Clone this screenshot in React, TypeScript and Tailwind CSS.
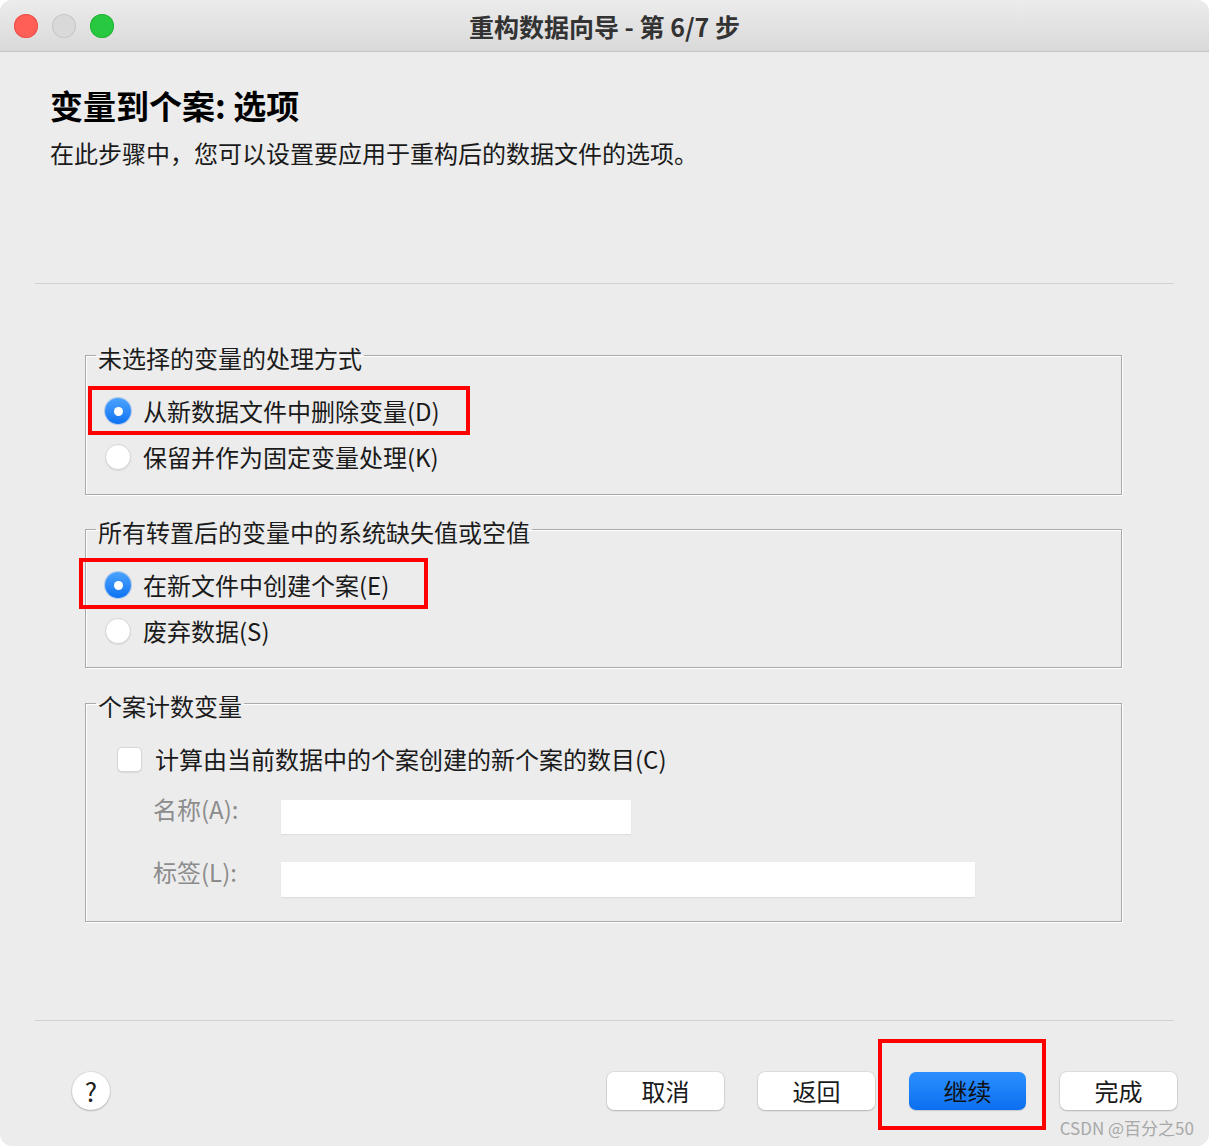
import React from 'react';

const FONT = { fontFamily: '"Noto Sans CJK SC", "Noto Sans", sans-serif' };

function Radio({ checked }: { checked?: boolean }) {
  if (checked) {
    return (
      <span className="flex h-[26px] w-[26px] shrink-0 items-center justify-center rounded-full bg-gradient-to-b from-[#4aa3ff] to-[#0a72f2] shadow-[0_0_0_1px_rgba(0,100,230,0.25)]">
        <span className="h-[9px] w-[9px] rounded-full bg-white" />
      </span>
    );
  }
  return (
    <span className="h-[26px] w-[26px] shrink-0 rounded-full border border-[#d6d6d6] bg-white shadow-[0_1px_1px_rgba(0,0,0,0.08)]" />
  );
}

function Group({ title, children }: { title: string; children: React.ReactNode }) {
  return (
    <fieldset className="mx-[85px] w-[1037px] border border-[#a9a9a9] shadow-[inset_1px_1px_0_#ffffff,1px_1px_0_#ffffff]">
      <legend className="ml-[10px] px-[2px] pt-[5px] text-[24px] leading-[32px] text-[#1c1c1c]">{title}</legend>
      {children}
    </fieldset>
  );
}

function Button({ label, primary }: { label: string; primary?: boolean }) {
  return (
    <button
      className={
        primary
          ? 'h-[38px] w-[117px] rounded-[7px] bg-gradient-to-b from-[#2b8fff] to-[#0a6ff0] text-[24px] leading-[38px] text-[#101010] shadow-[0_1px_1px_rgba(0,0,0,0.15)]'
          : 'h-[38px] w-[117px] rounded-[7px] bg-white text-[24px] leading-[38px] text-[#1a1a1a] shadow-[0_0_0_1px_rgba(0,0,0,0.06),0_1px_2px_rgba(0,0,0,0.18)]'
      }
    >
      {label}
    </button>
  );
}

export default function App() {
  return (
    <div className="min-h-[1146px] w-[1209px] bg-white" style={FONT}>
      <div className="relative flex h-[1146px] w-[1209px] flex-col overflow-hidden rounded-[12px] bg-[#ececec]">
        {/* title bar */}
        <div className="grid h-[52px] shrink-0 grid-cols-[1fr_auto_1fr] items-center border-b border-[#c4c4c4] bg-gradient-to-b from-[#ececec] to-[#d9d9d9]">
          <div className="flex items-center gap-[14px] pl-[14px]">
            <span className="h-[24px] w-[24px] rounded-full bg-[#ff5f57] shadow-[inset_0_0_0_1px_rgba(220,60,50,0.5)]" />
            <span className="h-[24px] w-[24px] rounded-full bg-[#d9d9d9] shadow-[inset_0_0_0_1px_#c6c6c6]" />
            <span className="h-[24px] w-[24px] rounded-full bg-[#28c840] shadow-[inset_0_0_0_1px_rgba(20,160,40,0.5)]" />
          </div>
          <div className="text-[25px] font-bold leading-[32px] text-[#333333]">重构数据向导 - 第 6/7 步</div>
          <div />
        </div>

        {/* header */}
        <div className="px-[50px] pt-[33px]">
          <h1 className="text-[33px] font-bold leading-[40px] text-black">变量到个案: 选项</h1>
          <p className="mt-[11px] text-[24px] leading-[34px] text-[#1a1a1a]">
            在此步骤中，您可以设置要应用于重构后的数据文件的选项。
          </p>
        </div>

        <div className="mx-[35px] mt-[113px] h-px bg-[#d3d3d3]" />

        {/* group 1 */}
        <div className="mt-[53px]">
          <Group title="未选择的变量的处理方式">
            <div className="pb-[14px] pt-[14px]">
              <div className="relative flex h-[46px] items-center gap-[12px] pl-[19px]">
                <Radio checked />
                <span className="text-[24px] text-[#1a1a1a]">从新数据文件中删除变量(D)</span>
                <div className="absolute left-[2px] top-[-2px] h-[49px] w-[382px] border-4 border-[#ff0000]" />
              </div>
              <div className="flex h-[46px] items-center gap-[12px] pl-[19px]">
                <Radio />
                <span className="text-[24px] text-[#1a1a1a]">保留并作为固定变量处理(K)</span>
              </div>
            </div>
          </Group>
        </div>

        {/* group 2 */}
        <div className="mt-[16px]">
          <Group title="所有转置后的变量中的系统缺失值或空值">
            <div className="pb-[13px] pt-[14px]">
              <div className="relative flex h-[46px] items-center gap-[12px] pl-[19px]">
                <Radio checked />
                <span className="text-[24px] text-[#1a1a1a]">在新文件中创建个案(E)</span>
                <div className="absolute left-[-7px] top-[-4px] h-[51px] w-[349px] border-4 border-[#ff0000]" />
              </div>
              <div className="flex h-[46px] items-center gap-[12px] pl-[19px]">
                <Radio />
                <span className="text-[24px] text-[#1a1a1a]">废弃数据(S)</span>
              </div>
            </div>
          </Group>
        </div>

        {/* group 3 */}
        <div className="mt-[17px]">
          <Group title="个案计数变量">
            <div className="pb-[24px] pt-[14px]">
              <div className="flex h-[46px] items-center gap-[13px] pl-[31px]">
                <span className="h-[25px] w-[25px] shrink-0 rounded-[5px] border border-[#d6d6d6] bg-white shadow-[0_1px_1px_rgba(0,0,0,0.08)]" />
                <span className="text-[24px] text-[#1a1a1a]">计算由当前数据中的个案创建的新个案的数目(C)</span>
              </div>
              <div className="mt-[11px] flex items-start pl-[67px]">
                <span className="w-[128px] text-[24px] leading-[32px] text-[#8c8c8c]">名称(A):</span>
                <div className="mt-[7px] h-[34px] w-[350px] bg-white shadow-[0_1px_1px_rgba(0,0,0,0.06)]" />
              </div>
              <div className="mt-[22px] flex items-start pl-[67px]">
                <span className="w-[128px] text-[24px] leading-[32px] text-[#8c8c8c]">标签(L):</span>
                <div className="mt-[6px] h-[35px] w-[694px] bg-white shadow-[0_1px_1px_rgba(0,0,0,0.06)]" />
              </div>
            </div>
          </Group>
        </div>

        <div className="mx-[35px] mt-[98px] h-px bg-[#d3d3d3]" />

        {/* footer */}
        <div className="mt-[51px] flex items-center pl-[72px] pr-[32px]">
          <button className="flex h-[38px] w-[38px] items-center justify-center rounded-full bg-white text-[26px] leading-none text-[#222222] shadow-[0_0_0_1px_rgba(0,0,0,0.06),0_1px_2px_rgba(0,0,0,0.2)]">
            ?
          </button>
          <div className="ml-auto flex items-center gap-[34px]">
            <Button label="取消" />
            <Button label="返回" />
            <div className="relative">
              <Button label="继续" primary />
              <div className="absolute left-[-31px] top-[-33px] h-[91px] w-[168px] border-4 border-[#ff0000]" />
            </div>
            <Button label="完成" />
          </div>
        </div>

        <div className="absolute bottom-[7px] right-[15px] text-[17px] leading-[22px] text-[#a8a8a8]">CSDN @百分之50</div>
      </div>
    </div>
  );
}
